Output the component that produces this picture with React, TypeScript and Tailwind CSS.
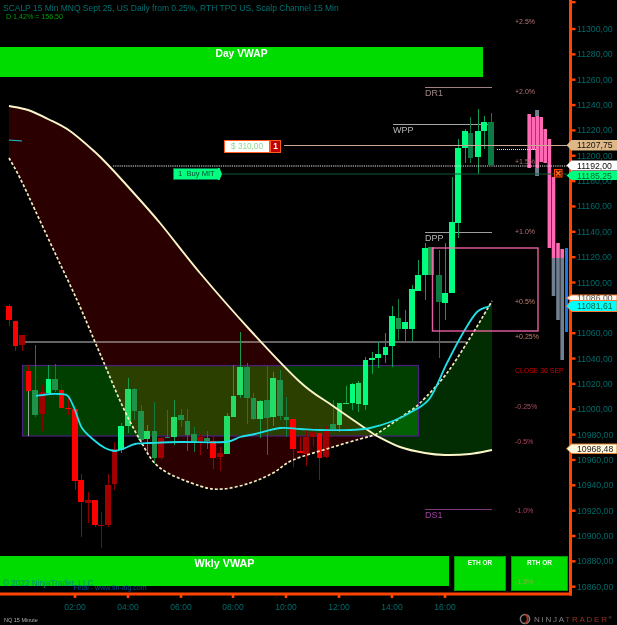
import React from "react";

type Pt = [number, number];
type Candle = [number, number, number, number, number, string];

function smooth(pts: Pt[]): string {
  let d = `M${pts[0][0]} ${pts[0][1]}`;
  for (let i = 0; i < pts.length - 1; i++) {
    const p0 = pts[Math.max(0, i - 1)];
    const p1 = pts[i];
    const p2 = pts[i + 1];
    const p3 = pts[Math.min(pts.length - 1, i + 2)];
    const c1x = p1[0] + (p2[0] - p0[0]) / 6;
    const c1y = p1[1] + (p2[1] - p0[1]) / 6;
    const c2x = p2[0] - (p3[0] - p1[0]) / 6;
    const c2y = p2[1] - (p3[1] - p1[1]) / 6;
    d += ` C${c1x.toFixed(1)} ${c1y.toFixed(1)} ${c2x.toFixed(1)} ${c2y.toFixed(1)} ${p2[0]} ${p2[1]}`;
  }
  return d;
}

const creamA: Pt[] = [[9,106],[28,110],[48,119],[70,131],[95,152],[110,167],[131,190],[160,223],[200,273],[250,330],[300,382],[333,406],[375,435]];
const creamB: Pt[] = [[375,435],[400,447],[425,453],[445,455],[470,454],[492,450]];
const dashA: Pt[] = [[9,158],[20,178],[35,210],[55,253],[77,300],[95,342],[107,370],[122,405],[140,440],[160,468],[200,486],[223,489],[250,483],[273,473],[293,460],[333,447],[360,439],[375,435]];
const dashB: Pt[] = [[375,435],[387,427],[407,413],[420,403],[447,373],[473,333],[492,301]];
const cyan: Pt[] = [[36,396],[50,394],[60,394],[68,396],[75,410],[82,428],[95,441],[105,448],[115,451],[125,448],[135,444],[150,443],[180,442],[225,442],[240,437],[255,434],[280,428],[300,429],[320,430],[350,430],[370,428],[393,421],[413,411],[430,398],[447,363],[463,333],[477,312],[490,306]];

const rev = (p: Pt[]) => [...p].reverse();
const redArea = smooth(creamA) + " L" + smooth(rev(dashA)).slice(1) + " Z";
const greenArea = smooth(dashB) + " L" + smooth(rev(creamB)).slice(1) + " Z";

const fills: Record<string, string> = { G: "#00ff7f", m: "#22dd66", g: "#1f9148", d: "#0c7a45", R: "#ff0000", r: "#a00000" };
const wicks: Record<string, string> = { G: "#0f9a55", m: "#179a4c", g: "#157a40", d: "#0c7a45", R: "#a80000", r: "#8b0000" };

const candles: Candle[] = [
  [9,304,306,320,326,"R"],[15.5,321,321,346,351,"R"],[22,335,335,345,351,"r"],[28.5,365,371,391,391,"R"],
  [35,345,390,415,417,"g"],[42,385,392,414,431,"r"],[48.5,365,379,393,393,"G"],[55,364,379,390,392,"g"],
  [61.5,384,390,408,408,"R"],[68,397,408,409,415,"R"],[75,408,409,481,490,"R"],[81,474,480,502,537,"R"],
  [88,492,500,503,523,"r"],[95,500,500,525,527,"R"],[101,512,525,526,548,"r"],[108,474,485,525,527,"r"],
  [114.5,442,449,484,490,"r"],[121,423,426,450,453,"G"],[128,378,389,426,433,"m"],[134.5,388,389,411,420,"g"],
  [141,405,411,440,445,"g"],[147,425,431,439,453,"m"],[154.5,402,431,458,464,"g"],[161,435,438,458,460,"r"],
  [167.5,410,437,438,438,"g"],[174,400,417,437,445,"m"],[181,409,415,420,427,"g"],[187.5,409,421,435,451,"g"],
  [194,427,434,442,452,"g"],[200,434,437,441,455,"r"],[207,431,438,441,449,"g"],[213,427,441,458,469,"R"],
  [220,447,453,457,471,"r"],[227,413,416,454,454,"m"],[233.5,365,396,417,417,"m"],[240,332,367,395,398,"m"],
  [247,363,367,398,424,"g"],[253.5,393,398,419,420,"g"],[260,400,401,419,438,"m"],[267,366,400,418,455,"g"],
  [273,372,378,417,426,"m"],[280,370,380,416,420,"g"],[286.5,397,417,420,437,"g"],[293,419,419,449,467,"R"],
  [300,437,451,453,453,"R"],[306,430,437,454,466,"r"],[313,425,432,437,446,"r"],[319.5,432,433,458,480,"R"],
  [326,426,430,457,458,"r"],[333,400,424,429,430,"g"],[339.5,403,403,425,432,"m"],[346,386,403,404,404,"m"],
  [352.5,383,384,403,410,"G"],[358.5,381,383,404,412,"m"],[365.5,357,360,405,410,"G"],[372,352,358,360,374,"G"],
  [378,342,354,358,368,"G"],[385.5,333,347,355,363,"G"],[392,306,316,346,367,"G"],[398.5,299,318,329,340,"g"],
  [405,310,322,329,342,"G"],[412,285,289,329,341,"G"],[418,260,275,291,291,"G"],[425,243,248,275,300,"G"],
  [431,247,247,275,275,"g"],[439,250,275,302,358,"d"],[445,243,293,303,320,"G"],[452,177,222,293,293,"G"],
  [458,139,148,223,238,"G"],[465,129,131,148,163,"G"],[470.5,117,133,158,163,"d"],[478,109,131,157,174,"G"],
  [484,116,122,131,149,"G"],[491,113,122,165,165,"d"],
];

const pinkBars: [number, number, number][] = [
  [527.4, 114, 168],[531.4, 117, 150],[535.4, 110, 176],[539.4, 117, 162],[543.4, 129, 163],
  [547.6, 139, 248],[551.7, 177, 258],[556.2, 243, 258],[560.4, 249, 258],
];
const greyBars: [number, number, number][] = [
  [551.7, 258, 296],[556.2, 258, 320],[560.4, 258, 360],
];

const prices = ["11300,00","11280,00","11260,00","11240,00","11220,00","11200,00","11180,00","11160,00","11140,00","11120,00","11100,00","11080,00","11060,00","11040,00","11020,00","11000,00","10980,00","10960,00","10940,00","10920,00","10900,00","10880,00","10860,00"];
const priceY = (i: number) => 29 + i * 25.35;
const times: [string, number][] = [["02:00",75],["04:00",128],["06:00",181],["08:00",233],["10:00",286],["12:00",339],["14:00",392],["16:00",445]];
const pct: [string, number, string][] = [
  ["+2.5%",24,"#b5737a"],["+2.0%",94,"#b5737a"],["+1.5%",164,"#b5737a"],["+1.0%",234,"#b5737a"],["+0.5%",304,"#c58070"],
  ["+0.25%",339,"#c58070"],["-0.25%",409,"#a85060"],["-0.5%",444,"#b04560"],["-1.0%",513,"#b04070"],
];
const levels: [string, number, number, number, string, string][] = [
  ["DR1",425,87,96,"#b09090","#a08888"],["WPP",393,124,133,"#b8b8b8","#b8b8b8"],["DPP",425,232,241,"#b0b0b0","#b8b8b8"],["DS1",425,509,518,"#884088","#a040a0"],
];

const sans = "[font-family:'Liberation_Sans',Arial,sans-serif]";

function Tag({ y, h, fill, stroke, text, color }: { y: number; h: number; fill: string; stroke?: string; text: string; color: string }) {
  return (
    <g>
      <polygon points={`566.5,${y + h / 2} 571.5,${y} 617,${y} 617,${y + h} 571.5,${y + h}`} fill={fill} stroke={stroke ?? "none"} strokeWidth="1" />
      <text x="577" y={y + h / 2 + 3} fontSize="8.7" fill={color}>{text}</text>
    </g>
  );
}

export default function App() {
  return (
    <div className={`relative h-[625px] w-[617px] overflow-hidden bg-black ${sans}`}>
      <svg className={`absolute inset-0 ${sans}`} width="617" height="625" viewBox="0 0 617 625">
        <path d={redArea} fill="#2a0000" />
        <path d={greenArea} fill="#022d02" />
        <rect x="22.5" y="365.5" width="396" height="70.5" fill="#003f00" stroke="none" className="mix-blend-screen" />
        <rect x="22.5" y="365.5" width="396" height="70.5" fill="none" stroke="#4b1f7f" strokeWidth="1.2" />
        <line x1="28.5" y1="366" x2="28.5" y2="436" stroke="#c0c0c0" strokeWidth="0.8" />

        <line x1="22" y1="342" x2="466" y2="342" stroke="#c8c8c8" strokeWidth="1.2" />
        {levels.map(([t, x, ly, ty, c1, c2]) => (
          <g key={t}>
            <line x1={x} y1={ly + 0.5} x2="492" y2={ly + 0.5} stroke={c1} strokeWidth="0.9" />
            <text x={x} y={ty} fontSize="9" fill={c2}>{t}</text>
          </g>
        ))}

        {candles.map(([x, wt, bt, bb, wb, k], i) => (
          <g key={i} shapeRendering="crispEdges">
            <line x1={x} y1={wt} x2={x} y2={wb} stroke={wicks[k]} strokeWidth="1" />
            <rect x={x - 2.6} y={bt} width="5.2" height={Math.max(1, bb - bt)} fill={fills[k]} />
          </g>
        ))}

        <path d={smooth(dashA)} fill="none" stroke="#f2ecc0" strokeWidth="1.7" strokeDasharray="3 2" />
        <path d={smooth(dashB)} fill="none" stroke="#f2ecc0" strokeWidth="1.7" strokeDasharray="3 2" />
        <path d={smooth(creamA)} fill="none" stroke="#fbf5c8" strokeWidth="1.9" />
        <path d={smooth(creamB)} fill="none" stroke="#fbf5c8" strokeWidth="1.9" />
        <path d={smooth(cyan)} fill="none" stroke="#1fe0e8" strokeWidth="1.8" />
        <line x1="9" y1="140" x2="22" y2="141" stroke="#1fc8d0" strokeWidth="1.2" />

        <rect x="432.5" y="248" width="105.5" height="83" fill="none" stroke="#ff69b4" strokeWidth="1.4" opacity="0.9" />

        {pinkBars.map(([x, a, b]) => (
          <rect key={x} x={x} y={a} width="3.6" height={b - a} fill="#ff69b4" />
        ))}
        <rect x="535.4" y="110" width="3.6" height="6" fill="#708090" />
        <rect x="535.4" y="168" width="3.6" height="8" fill="#708090" />
        {greyBars.map(([x, a, b]) => (
          <rect key={x} x={x} y={a} width="3.6" height={b - a} fill="#708090" />
        ))}
        <rect x="565" y="248" width="3" height="84" fill="#1e78e0" />

        <line x1="497" y1="149.5" x2="537" y2="149.5" stroke="#f0d0e0" strokeWidth="1" strokeDasharray="1 1" />
        <line x1="284" y1="145.5" x2="567" y2="145.5" stroke="#c8a890" strokeWidth="1" />
        <line x1="113" y1="166" x2="567" y2="166" stroke="#e8e8e8" strokeWidth="1.2" strokeDasharray="1.2 1" />
        <line x1="222" y1="174" x2="567" y2="174" stroke="#0a5a38" strokeWidth="1.2" />

        {pct.map(([t, y, c]) => (
          <text key={t} x="515" y={y} fontSize="7" fill={c}>{t}</text>
        ))}
        <text x="515" y="373" fontSize="6.9" fill="#d00000">CLOSE 30 SEP</text>

        {prices.map((p, i) => (
          <g key={p}>
            <rect x="571" y={priceY(i) - 1.2} width="4.5" height="2.4" fill="#ff4500" />
            <text x="577" y={priceY(i) + 3} fontSize="8.7" fill="#006a6a">{p}</text>
          </g>
        ))}
        <rect x="571" y="1" width="4.5" height="2.4" fill="#ff4500" />
        <rect x="569" y="0" width="3" height="595.5" fill="#ff4500" />
        <rect x="0" y="592.5" width="572" height="3" fill="#ff4500" />
        {times.map(([t, x]) => (
          <g key={t}>
            <rect x={x - 1.3} y="595" width="2.6" height="3" fill="#ff4500" />
            <text x={x} y="610" fontSize="8.5" textAnchor="middle" fill="#006a6a">{t}</text>
          </g>
        ))}

        <Tag y={295} h={6} fill="#fff8f0" stroke="#ff7a30" text="11086,00" color="#555" />
        <Tag y={140} h={10.5} fill="#deb887" text="11207,75" color="#111" />
        <Tag y={171} h={9} fill="#00ff7f" text="11185,25" color="#063" />
        <Tag y={160.5} h={10} fill="#ffffff" text="11192,00" color="#111" />
        <Tag y={300.5} h={11} fill="#00ffff" stroke="#ff7a30" text="11081,61" color="#063" />
        <Tag y={444} h={9.5} fill="#fff8dc" stroke="#e08030" text="10968,48" color="#222" />

        <rect x="554.5" y="169.5" width="7.5" height="7.5" fill="#5a1800" stroke="#ff4500" strokeWidth="1" />
        <path d="M556 171 L560.5 175.5 M560.5 171 L556 175.5" stroke="#ff6a20" strokeWidth="1.5" />

        <text x="4" y="621.5" fontSize="5.5" fill="#b0b0b0">NQ 15 Minute</text>

        <circle cx="525" cy="619" r="4.6" fill="none" stroke="#808080" strokeWidth="1.5" />
        <path d="M525 614.5 C528.5 616 528.5 622 525 623.5" fill="none" stroke="#b03018" strokeWidth="1.7" />
        <text x="534" y="622" fontSize="8" letterSpacing="1.75" fill="#808080">
          NINJA<tspan fill="#96301c">TRADER</tspan>
          <tspan fontSize="4" dy="-3" fill="#808080">®</tspan>
        </text>
      </svg>

      {/* Panels over the chart, laid out top to bottom */}
      <div className="absolute inset-0 flex flex-col pb-[34px] pt-[2.5px]">
        <div className="pl-[3px] text-[8.47px] leading-[10px] whitespace-nowrap text-[#007272]">
          SCALP 15 Min MNQ Sept 25, US Daily from 0.25%, RTH TPO US, Scalp Channel 15 Min
        </div>
        <div className="pl-[6px] text-[7.1px] leading-[9px] whitespace-nowrap text-[#00a000]">D 1,42% = 156,50</div>

        <div className="mt-[25.5px] flex h-[30px] w-[483px] justify-center bg-[#00dc00] pt-px text-[10.3px] font-bold leading-[12px] text-white">
          Day VWAP
        </div>

        <div className="flex-1" />

        <div className="flex h-[35px] gap-[5px]">
          <div className="flex h-[29.5px] w-[449px] flex-col bg-[#00dc00]">
            <div className="pt-px text-center text-[10.8px] font-bold leading-[12px] text-white">Wkly VWAP</div>
            <div className="mt-[10px] flex items-start pl-[3px] whitespace-nowrap">
              <div className="text-[8.2px] leading-[10px] text-[#008f70]">© 2022 NinjaTrader, LLC</div>
              <div className="-ml-[20px] mt-[4px] text-[7.1px] leading-[10px] text-[#0a4f8a]">Final - www.fin-alg.com</div>
            </div>
          </div>
          <div className="w-[52px] border border-[#00a000] bg-[#00dc00] pt-px text-center text-[6.5px] font-bold leading-[10px] text-[#e8ffe8]">
            ETH OR
          </div>
          <div className="flex w-[57px] flex-col border border-[#00a000] bg-[#00dc00] pt-px text-[6.5px] font-bold leading-[10px] text-[#e8ffe8]">
            <div className="text-center">RTH OR</div>
            <div className="mt-[9px] pl-[3px] text-[7px] font-normal text-[#88b040]">-1.5%</div>
          </div>
        </div>
      </div>

      {/* Order chips pinned to their price lines */}
      <div className="absolute left-[224px] top-[139.5px] flex h-[13px] w-[57px] text-[8.2px] leading-[11px]">
        <div className="w-[46px] border border-[#ff5a20] bg-white text-center text-[#8fd98f]">$ 310,00</div>
        <div className="w-[11px] border border-[#ff5a20] bg-[#c00000] text-center font-bold text-white">1</div>
      </div>
      <div className="absolute left-[173px] top-[168px] flex h-[12px] items-stretch">
        <div className="w-[45px] border-y border-l border-[#0a7a50] bg-[#00ff7f] pl-[4px] text-[7.6px] leading-[10px] whitespace-nowrap text-[#064a30]">
          1 &nbsp;Buy MIT
        </div>
        <div className="w-[4px] bg-[#00ff7f] [clip-path:polygon(0_0,40%_0,100%_50%,40%_100%,0_100%)]" />
      </div>
    </div>
  );
}
